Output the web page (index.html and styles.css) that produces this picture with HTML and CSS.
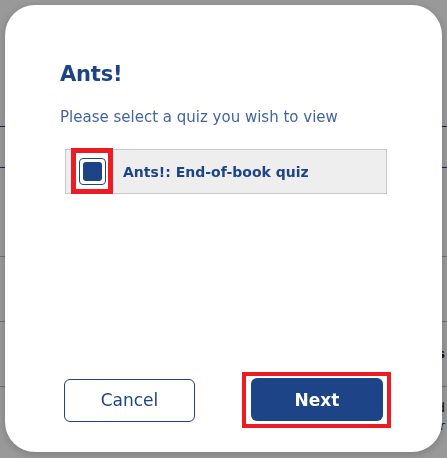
FILE: index.html
```html
<!DOCTYPE html>
<html lang="en">
<head>
    <meta charset="UTF-8">
    <meta name="viewport" content="width=device-width, initial-scale=1.0">
    <title>Select a quiz</title>
    <link rel="stylesheet" href="styles.css">
</head>
<body>
    <div class="page">
        <div class="page-tabs"></div>
        <div class="page-sub"></div>
        <table class="page-table">
            <tr><td>&nbsp;</td><td>&nbsp;</td><td>&nbsp;</td></tr>
            <tr class="head"><th>Basis</th><th>Title</th><th>Status</th></tr>
            <tr class="last"><td>Ch</td><td>&nbsp;</td><td>Added<br>12 Mar</td></tr>
        </table>
    </div>

    <div class="overlay">
        <div class="modal">
            <h1>Ants!</h1>
            <p class="modal-hint">Please select a quiz you wish to view</p>

            <label class="quiz-option">
                <span class="highlight check-frame">
                    <span class="check-box"><span class="check-fill"></span></span>
                </span>
                <span class="quiz-name">Ants!: End-of-book quiz</span>
            </label>

            <div class="modal-actions">
                <button class="btn-secondary">Cancel</button>
                <span class="highlight next-frame">
                    <button class="btn-primary">Next</button>
                </span>
            </div>
        </div>
    </div>
</body>
</html>
```

FILE: styles.css
```css
* {
    margin: 0;
    padding: 0;
    box-sizing: border-box;
}

body {
    font-family: 'DejaVu Sans', sans-serif;
    background: #ffffff;
    color: #1d4486;
    height: 458px;
    overflow: hidden;
}

/* page underneath the dialog */
.page {
    padding-top: 126px;
}

.page-tabs {
    height: 42px;
    border-top: 1px solid #1d4486;
    border-bottom: 1px solid #1d4486;
}

.page-sub {
    height: 88px;
}

.page-table {
    width: 100%;
    border-collapse: collapse;
    color: #222;
    font-size: 13px;
    line-height: 18px;
}

.page-table td,
.page-table th {
    border-top: 1px solid #bbb;
    height: 65px;
    padding: 0 2px;
    text-align: left;
}

.page-table td + td,
.page-table th + th {
    border-left: 1px solid #ccc;
}

.page-table th {
    font-weight: 700;
    border-bottom: 1px solid #bbb;
}

.page-table .last td {
    height: 60px;
    border-top: none;
}

.page-table td:first-child,
.page-table th:first-child {
    width: 98px;
    text-align: right;
}

.page-table td:last-child,
.page-table th:last-child {
    width: 129px;
    text-align: right;
}

/* dialog */
.overlay {
    position: fixed;
    inset: 0;
    background: rgba(0, 0, 0, 0.4);
    padding: 5px;
}

.modal {
    height: 447px;
    background: #ffffff;
    border-radius: 30px;
    display: flex;
    flex-direction: column;
    padding: 56px 0 0 55px;
    box-shadow: 0 2px 10px rgba(0, 0, 0, 0.2);
}

h1 {
    font-size: 21px;
    font-weight: 700;
    line-height: 26px;
    color: #1d4486;
    letter-spacing: -0.2px;
}

.modal-hint {
    margin-top: 20px;
    font-size: 15px;
    line-height: 21px;
    color: #4366a3;
}

.quiz-option {
    display: flex;
    align-items: center;
    width: 322px;
    height: 45px;
    margin: 21px 0 0 5px;
    padding-left: 5px;
    background: #eeeeee;
    border: 1px solid #c8c8c8;
}

.highlight {
    border: 5px solid #ed1c24;
    background: #ffffff;
}

.check-frame {
    display: flex;
    align-items: center;
    justify-content: center;
    width: 42px;
    height: 46px;
    margin-top: -1px;
}

.check-box {
    display: flex;
    align-items: center;
    justify-content: center;
    width: 27px;
    height: 27px;
    border: 1px solid #1d4486;
    border-radius: 4px;
    background: #ffffff;
}

.check-fill {
    width: 19px;
    height: 19px;
    border-radius: 3px;
    background: #1d4486;
}

.quiz-name {
    margin-left: 10px;
    font-size: 14px;
    font-weight: 700;
    color: #1d4486;
}

.modal-actions {
    display: flex;
    align-items: center;
    margin-top: auto;
    margin-bottom: 24px;
    padding-left: 4px;
    gap: 47px;
}

button {
    width: 132px;
    height: 43px;
    border-radius: 6px;
    font-family: 'DejaVu Sans', sans-serif;
    font-size: 17px;
    cursor: pointer;
}

.btn-secondary {
    width: 131px;
    background: #ffffff;
    color: #1d4486;
    border: 1px solid #1d4486;
}

.btn-primary {
    background: #1d4486;
    color: #ffffff;
    border: none;
    font-weight: 700;
}

.next-frame {
    display: flex;
    padding: 2px 4px 3px 5px;
    border-width: 4px;
}
```
